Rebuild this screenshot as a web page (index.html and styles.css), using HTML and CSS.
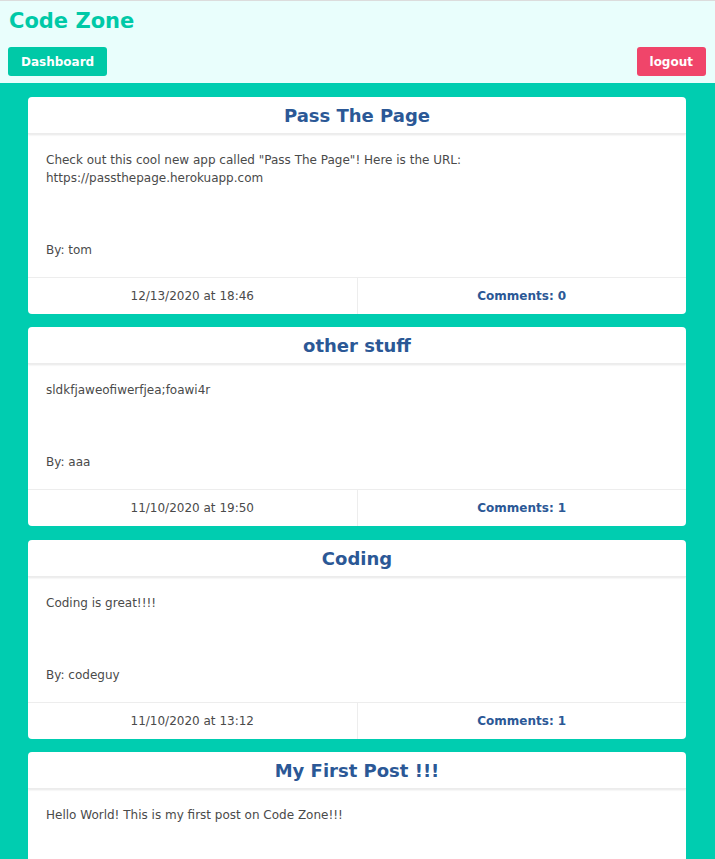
FILE: index.html
```html
<!DOCTYPE html>
<html>
<head>
<meta charset="utf-8">
<link rel="stylesheet" href="styles.css">
</head>
<body>
<header class="topbar">
  <h1 class="brand">Code Zone</h1>
  <nav class="nav">
    <a class="btn btn-primary">Dashboard</a>
    <a class="btn btn-danger">logout</a>
  </nav>
</header>
<main class="feed">
  <article class="card">
    <div class="card-header">Pass The Page</div>
    <div class="card-content">
      <p class="post-text">Check out this cool new app called "Pass The Page"! Here is the URL:<br>https://passthepage.herokuapp.com</p>
      <p class="post-author">By: tom</p>
    </div>
    <div class="card-footer">
      <span class="footer-item">12/13/2020 at 18:46</span>
      <span class="footer-item comments">Comments: 0</span>
    </div>
  </article>
  <article class="card">
    <div class="card-header">other stuff</div>
    <div class="card-content">
      <p class="post-text">sldkfjaweofiwerfjea;foawi4r</p>
      <p class="post-author">By: aaa</p>
    </div>
    <div class="card-footer">
      <span class="footer-item">11/10/2020 at 19:50</span>
      <span class="footer-item comments">Comments: 1</span>
    </div>
  </article>
  <article class="card card-gap">
    <div class="card-header">Coding</div>
    <div class="card-content">
      <p class="post-text">Coding is great!!!!</p>
      <p class="post-author">By: codeguy</p>
    </div>
    <div class="card-footer">
      <span class="footer-item">11/10/2020 at 13:12</span>
      <span class="footer-item comments">Comments: 1</span>
    </div>
  </article>
  <article class="card">
    <div class="card-header">My First Post !!!</div>
    <div class="card-content">
      <p class="post-text">Hello World! This is my first post on Code Zone!!!</p>
    </div>
  </article>
</main>
</body>
</html>
```
FILE: styles.css
```css
html, body {
  margin: 0;
  padding: 0;
}
body {
  background: #00cdb0;
  font-family: "DejaVu Sans", Verdana, sans-serif;
  color: #4a4a4a;
  font-size: 12px;
}
.topbar {
  background: #e9fefc;
  border-top: 1px solid #dcdcdc;
  padding: 7px 9px 7px 8px;
}
.brand {
  margin: 0 0 0 1px;
  font-size: 21px;
  line-height: 26px;
  font-weight: bold;
  color: #00c9a7;
}
.nav {
  display: flex;
  justify-content: space-between;
  margin-top: 13px;
}
.btn {
  display: inline-flex;
  align-items: center;
  justify-content: center;
  height: 29px;
  padding: 0 13px;
  border-radius: 3px;
  color: #fff;
  font-weight: bold;
  font-size: 12px;
}
.btn-primary { background: #00c9a7; }
.btn-danger { background: #f0456a; }
.feed {
  padding: 14px 29px 0 28px;
  display: flex;
  flex-direction: column;
  gap: 13px;
}
.card {
  background: #fff;
  border-radius: 4px;
  overflow: hidden;
}
.card-gap {
  margin-top: 1px;
}
.card-header {
  height: 36px;
  display: flex;
  align-items: center;
  justify-content: center;
  font-size: 18px;
  font-weight: bold;
  color: #2b5896;
  box-shadow: 0 1px 2px rgba(10, 10, 10, 0.1);
  border-bottom: 1px solid #ececec;
}
.card-content {
  padding: 17px 18px 18px;
}
.card-content p {
  margin: 0;
  line-height: 18px;
  font-size: 12px;
}
.post-text {
  margin-bottom: 54px !important;
}
.card-footer {
  display: flex;
  border-top: 1px solid #ededed;
  height: 36px;
}
.footer-item {
  flex: 1;
  display: flex;
  align-items: center;
  justify-content: center;
  font-size: 12px;
  color: #4a4a4a;
}
.footer-item + .footer-item {
  border-left: 1px solid #ededed;
}
.comments {
  color: #2b5896;
  font-weight: bold;
}
```
